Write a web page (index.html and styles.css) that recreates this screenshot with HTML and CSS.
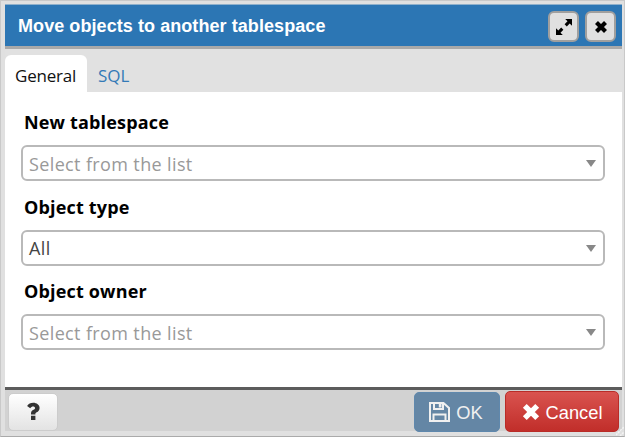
FILE: index.html
```
<!DOCTYPE html>
<html lang="en">
<head>
<meta charset="utf-8">
<title>Move objects to another tablespace</title>
<link rel="stylesheet" href="styles.css">
</head>
<body>
<div class="dialog">
  <header class="header">
    <h1 class="title">Move objects to another tablespace</h1>
    <button class="tool" aria-label="Maximize"><svg width="18" height="18" viewBox="0 0 18 18"><path d="M10.200 1H17v6.800l-2.300-2.300-2.900 2.900-2.200-2.200 2.900-2.900zM7.800 17H1v-6.800l2.300 2.300 2.900-2.900 2.200 2.200-2.900 2.900z"/></svg></button>
    <button class="tool" aria-label="Close"><svg width="14" height="14" viewBox="0 0 14 14"><path class="cross" d="M2.500 2.500l9 9M11.500 2.500l-9 9"/></svg></button>
  </header>
  <nav class="tabs">
    <a class="tab active">General</a>
    <a class="tab">SQL</a>
  </nav>
  <main class="content">
    <div class="field">
      <label class="label">New tablespace</label>
      <div class="select placeholder"><span>Select from the list</span><i class="caret"></i></div>
    </div>
    <div class="field">
      <label class="label">Object type</label>
      <div class="select value"><span>All</span><i class="caret"></i></div>
    </div>
    <div class="field">
      <label class="label">Object owner</label>
      <div class="select placeholder"><span>Select from the list</span><i class="caret"></i></div>
    </div>
  </main>
  <footer class="footer">
    <button class="btn help" aria-label="Help"><svg width="14" height="19" viewBox="0 0 14 19"><path d="M5 18v-4.200h4.400V18zM5 12.400v-1c0-2 1.200-2.800 2.500-3.600 1-.6 1.600-1 1.600-1.800 0-1-.9-1.600-2-1.600-1.200 0-1.900.6-2.900 1.900L1.100 4C2.600 1.800 4.400.7 7.300.7c3.300 0 6.300 2.200 6.300 5.200 0 2.500-1.500 3.500-2.800 4.300-.9.500-1.400.9-1.400 1.500v.7z"/></svg></button>
    <span class="spacer"></span>
    <button class="btn ok"><svg width="21" height="20" viewBox="0 0 21 20"><path class="disk" d="M1 1h13.500L20 6v13H1zM5 1v6h9V1M4.500 19v-6.500h12V19"/><path class="slot" d="M9.800 1.500h2.700v4H9.800z"/></svg><span class="caption">OK</span></button>
    <button class="btn cancel"><svg width="18" height="18" viewBox="0 0 18 18"><path class="cross" d="M2.800 2.800l12.400 12.400M15.200 2.800L2.800 15.200"/></svg><span class="caption">Cancel</span></button>
  </footer>
  <svg class="grip" width="8" height="10" viewBox="0 0 8 10"><path d="M0 9L8 1M4 10l4-4"/></svg>
</div>
</body>
</html>
```

FILE: styles.css
```
* { box-sizing: border-box; }
body { margin: 0; width: 625px; height: 437px; overflow: hidden; background: #e0e0e0; }
.dialog {
  position: relative;
  height: 437px;
  padding: 4px 2px 4px 4px;
  border: 1px solid #c9c9c9;
  border-bottom-color: #aaa;
  background: #e0e0e0;
  font-family: "Open Sans", "Noto Sans", sans-serif;
}
.header {
  display: flex;
  align-items: flex-start;
  height: 45px;
  padding: 6px 6px 0 13px;
  background: #2c76b4;
  border-top: 1px solid #8fb0cb;
  border-bottom: 3px solid #a9a9a9;
  margin-top: -1px;
}
.title {
  flex: 1;
  margin: 4px 0 0;
  font: bold 18px/22px "Liberation Sans", sans-serif;
  letter-spacing: 0.07px;
  color: #fff;
  white-space: nowrap;
}
.tool {
  display: flex;
  align-items: center;
  justify-content: center;
  width: 31px;
  height: 31px;
  margin-left: 6px;
  padding: 0;
  border: 2px solid #a09f9e;
  border-radius: 6px;
  background: #e0e0e0;
}
.tool:first-of-type { margin-left: 0; }
.cross { fill: none; stroke: currentColor; stroke-width: 4.2; }
.tool .cross { stroke: #000; }
.tabs { display: flex; height: 43px; padding-top: 6px; background: #e1e1e1; }
.tab {
  height: 37px;
  padding: 0 11px;
  border-radius: 6px 6px 0 0;
  font-size: 17px;
  font-weight: 500;
  line-height: 41px;
  color: #337ab7;
}
.tab.active { width: 82px; padding: 0 10px; background: #fff; color: #111; letter-spacing: -0.2px; }
.content { height: 295px; padding: 17px 17px 0 16px; background: #fff; }
.field { height: 84.5px; }
.label {
  display: block;
  height: 36px;
  padding-left: 3px;
  font-size: 18px;
  line-height: 26px;
  font-weight: bold;
  letter-spacing: 0.17px;
  color: #000;
}
.select {
  display: flex;
  align-items: center;
  justify-content: space-between;
  height: 36px;
  padding: 1px 7px 0 6px;
  border: 2px solid #b9b9b9;
  border-radius: 6px;
  font-size: 18px;
  font-weight: 500;
  letter-spacing: 0.37px;
  color: #444;
}
.placeholder { color: #999; }
.caret { border: 5px solid transparent; border-top: 7px solid #888; border-bottom: 0; }
.footer {
  display: flex;
  height: 46px;
  padding: 2px 3px 0 3px;
  border-top: 3px solid #5c5c5c;
  background: linear-gradient(#d2d2d2 41px, #e0e0e0 41px);
}
.spacer { flex: 1; }
.btn {
  display: flex;
  align-items: center;
  justify-content: center;
  height: 40px;
  padding: 0;
  border: 1px solid #ccc;
  border-radius: 5px;
  font: 18.3px "Liberation Sans", sans-serif;
  color: #fff;
}
.caption { padding-top: 2px; }
.help { width: 50px; height: 38px; margin-top: 1px; padding-bottom: 2px; background: linear-gradient(#fff, #e3e3e3); }
.help svg { fill: #333; }
.ok { width: 86px; margin-right: 5px; gap: 6px; background: #6486a5; border-color: #5f88ad; color: #f0f0f0; }
.ok svg { margin-left: -2px; }
.disk { fill: none; stroke: #f0f0f0; stroke-width: 2; }
.slot { fill: #f0f0f0; }
.cancel { width: 114px; height: 41px; gap: 6px; margin-top: -1px; background: linear-gradient(#d9534f, #c12e2a); border-color: #b92c28; }
.cancel .caption { padding-top: 3px; }
.cancel .cross { stroke-width: 5.4; }
.grip { position: absolute; right: 0; bottom: 0; fill: none; stroke: #f4f4f4; stroke-width: 1.5; stroke-dasharray: 2 1; }
```
